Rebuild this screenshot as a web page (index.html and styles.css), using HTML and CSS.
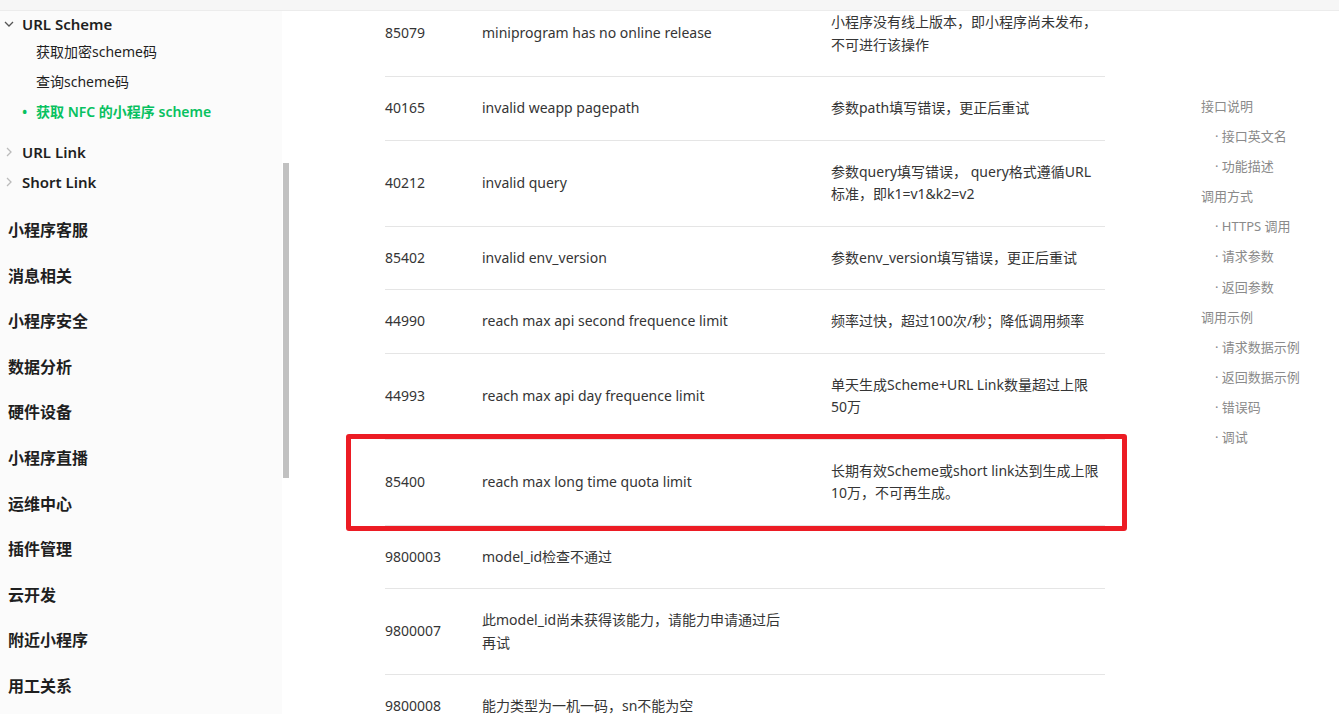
FILE: index.html
```html
<!DOCTYPE html>
<html>
<head>
    <meta charset="utf-8">
    <title>获取 NFC 的小程序 scheme</title>
    <link rel="stylesheet" href="styles.css">
</head>
<body>
    <div class="topbar"></div>

    <div class="page">
        <div class="sidebar">
            <div class="group open">
                <svg class="chev" width="12" height="12" viewBox="0 0 12 12"><path d="M2 4 L6 8 L10 4" fill="none" stroke="#555" stroke-width="1.3"/></svg>
                <span>URL Scheme</span>
            </div>
            <div class="sub">获取加密scheme码</div>
            <div class="sub">查询scheme码</div>
            <div class="sub active"><span class="dot">•</span>获取 NFC 的小程序 scheme</div>

            <div class="group first-closed">
                <svg class="chev" width="12" height="12" viewBox="0 0 12 12"><path d="M4 2 L8 6 L4 10" fill="none" stroke="#bbb" stroke-width="1.3"/></svg>
                <span>URL Link</span>
            </div>
            <div class="group">
                <svg class="chev" width="12" height="12" viewBox="0 0 12 12"><path d="M4 2 L8 6 L4 10" fill="none" stroke="#bbb" stroke-width="1.3"/></svg>
                <span>Short Link</span>
            </div>

            <div class="top-items">
                <div class="top-item">小程序客服</div>
                <div class="top-item">消息相关</div>
                <div class="top-item">小程序安全</div>
                <div class="top-item">数据分析</div>
                <div class="top-item">硬件设备</div>
                <div class="top-item">小程序直播</div>
                <div class="top-item">运维中心</div>
                <div class="top-item">插件管理</div>
                <div class="top-item">云开发</div>
                <div class="top-item">附近小程序</div>
                <div class="top-item">用工关系</div>
            </div>
        </div>

        <div class="track"><div class="thumb"></div></div>

        <div class="main">
            <div class="table">
                <div class="row">
                    <div class="code">85079</div>
                    <div class="msg">miniprogram has no online release</div>
                    <div class="desc">小程序没有线上版本，即小程序尚未发布，不可进行该操作</div>
                </div>
                <div class="row">
                    <div class="code">40165</div>
                    <div class="msg">invalid weapp pagepath</div>
                    <div class="desc">参数path填写错误，更正后重试</div>
                </div>
                <div class="row">
                    <div class="code">40212</div>
                    <div class="msg">invalid query</div>
                    <div class="desc">参数query填写错误， query格式遵循URL标准，即k1=v1&amp;k2=v2</div>
                </div>
                <div class="row">
                    <div class="code">85402</div>
                    <div class="msg">invalid env_version</div>
                    <div class="desc">参数env_version填写错误，更正后重试</div>
                </div>
                <div class="row">
                    <div class="code">44990</div>
                    <div class="msg">reach max api second frequence limit</div>
                    <div class="desc">频率过快，超过100次/秒；降低调用频率</div>
                </div>
                <div class="row">
                    <div class="code">44993</div>
                    <div class="msg">reach max api day frequence limit</div>
                    <div class="desc">单天生成Scheme+URL Link数量超过上限50万</div>
                </div>
                <div class="row marked">
                    <div class="code">85400</div>
                    <div class="msg">reach max long time quota limit</div>
                    <div class="desc">长期有效Scheme或short link达到生成上限10万，不可再生成。</div>
                    <div class="mark"></div>
                </div>
                <div class="row">
                    <div class="code">9800003</div>
                    <div class="msg">model_id检查不通过</div>
                    <div class="desc"></div>
                </div>
                <div class="row">
                    <div class="code">9800007</div>
                    <div class="msg">此model_id尚未获得该能力，请能力申请通过后再试</div>
                    <div class="desc"></div>
                </div>
                <div class="row">
                    <div class="code">9800008</div>
                    <div class="msg">能力类型为一机一码，sn不能为空</div>
                    <div class="desc"></div>
                </div>
            </div>
        </div>

        <div class="toc">
            <div class="toc-h">接口说明</div>
            <div class="toc-i">· 接口英文名</div>
            <div class="toc-i">· 功能描述</div>
            <div class="toc-h">调用方式</div>
            <div class="toc-i">· HTTPS 调用</div>
            <div class="toc-i">· 请求参数</div>
            <div class="toc-i">· 返回参数</div>
            <div class="toc-h">调用示例</div>
            <div class="toc-i">· 请求数据示例</div>
            <div class="toc-i">· 返回数据示例</div>
            <div class="toc-i">· 错误码</div>
            <div class="toc-i">· 调试</div>
        </div>
    </div>
</body>
</html>
```

FILE: styles.css
```css
body {
    margin: 0;
    width: 1339px;
    height: 714px;
    overflow: hidden;
    background: #fff;
    font-family: "Noto Sans", "Noto Sans CJK SC", sans-serif;
    color: #353535;
}

.topbar {
    height: 10px;
    background: #f6f6f6;
    border-bottom: 1px solid #ececec;
}

.page {
    display: flex;
    height: 703px;
}

/* left nav */
.sidebar {
    width: 282px;
    flex-shrink: 0;
    background: #fbfbfb;
    color: #1f1f1f;
}

.group {
    display: flex;
    align-items: center;
    height: 30px;
    font-size: 15px;
    font-weight: 600;
    padding-left: 3px;
}
.group.open { height: 26px; }
.group.first-closed { margin-top: 10px; }
.group .chev { margin-right: 7px; }

.sub {
    height: 30px;
    line-height: 30px;
    font-size: 14px;
    padding-left: 36px;
    position: relative;
}
.sub.active {
    color: #07c160;
    font-weight: 600;
}
.sub .dot {
    position: absolute;
    left: 22px;
}

.top-items { margin-top: 11px; }
.top-item {
    height: 45.6px;
    line-height: 45.6px;
    font-size: 16px;
    font-weight: 600;
    padding-left: 8px;
}

.track {
    width: 7px;
    margin-left: 1px;
    flex-shrink: 0;
}
.thumb {
    margin-top: 152px;
    height: 315px;
    width: 6px;
    background: #c1c1c1;
}

/* table */
.main {
    padding-left: 95px;
    width: 720px;
    flex-shrink: 0;
}
.table { margin-top: -20px; }

.row {
    display: grid;
    grid-template-columns: 97px 349px 268px;
    align-items: center;
    border-bottom: 1px solid #e5e5e5;
    padding: 20px 6px 20px 0;
    font-size: 14px;
    line-height: 22.5px;
    position: relative;
}
.msg { padding-right: 40px; }

.mark {
    position: absolute;
    left: -39px;
    right: -22px;
    top: -6px;
    bottom: -6px;
    border: 5px solid #ec1c24;
    border-radius: 3px;
}

/* right toc */
.toc {
    margin-left: 96px;
    padding-top: 80px;
    font-size: 13px;
    color: #8a8a8a;
}
.toc-h, .toc-i {
    height: 30.1px;
    line-height: 30px;
    white-space: nowrap;
}
.toc-i { padding-left: 14px; }
```
